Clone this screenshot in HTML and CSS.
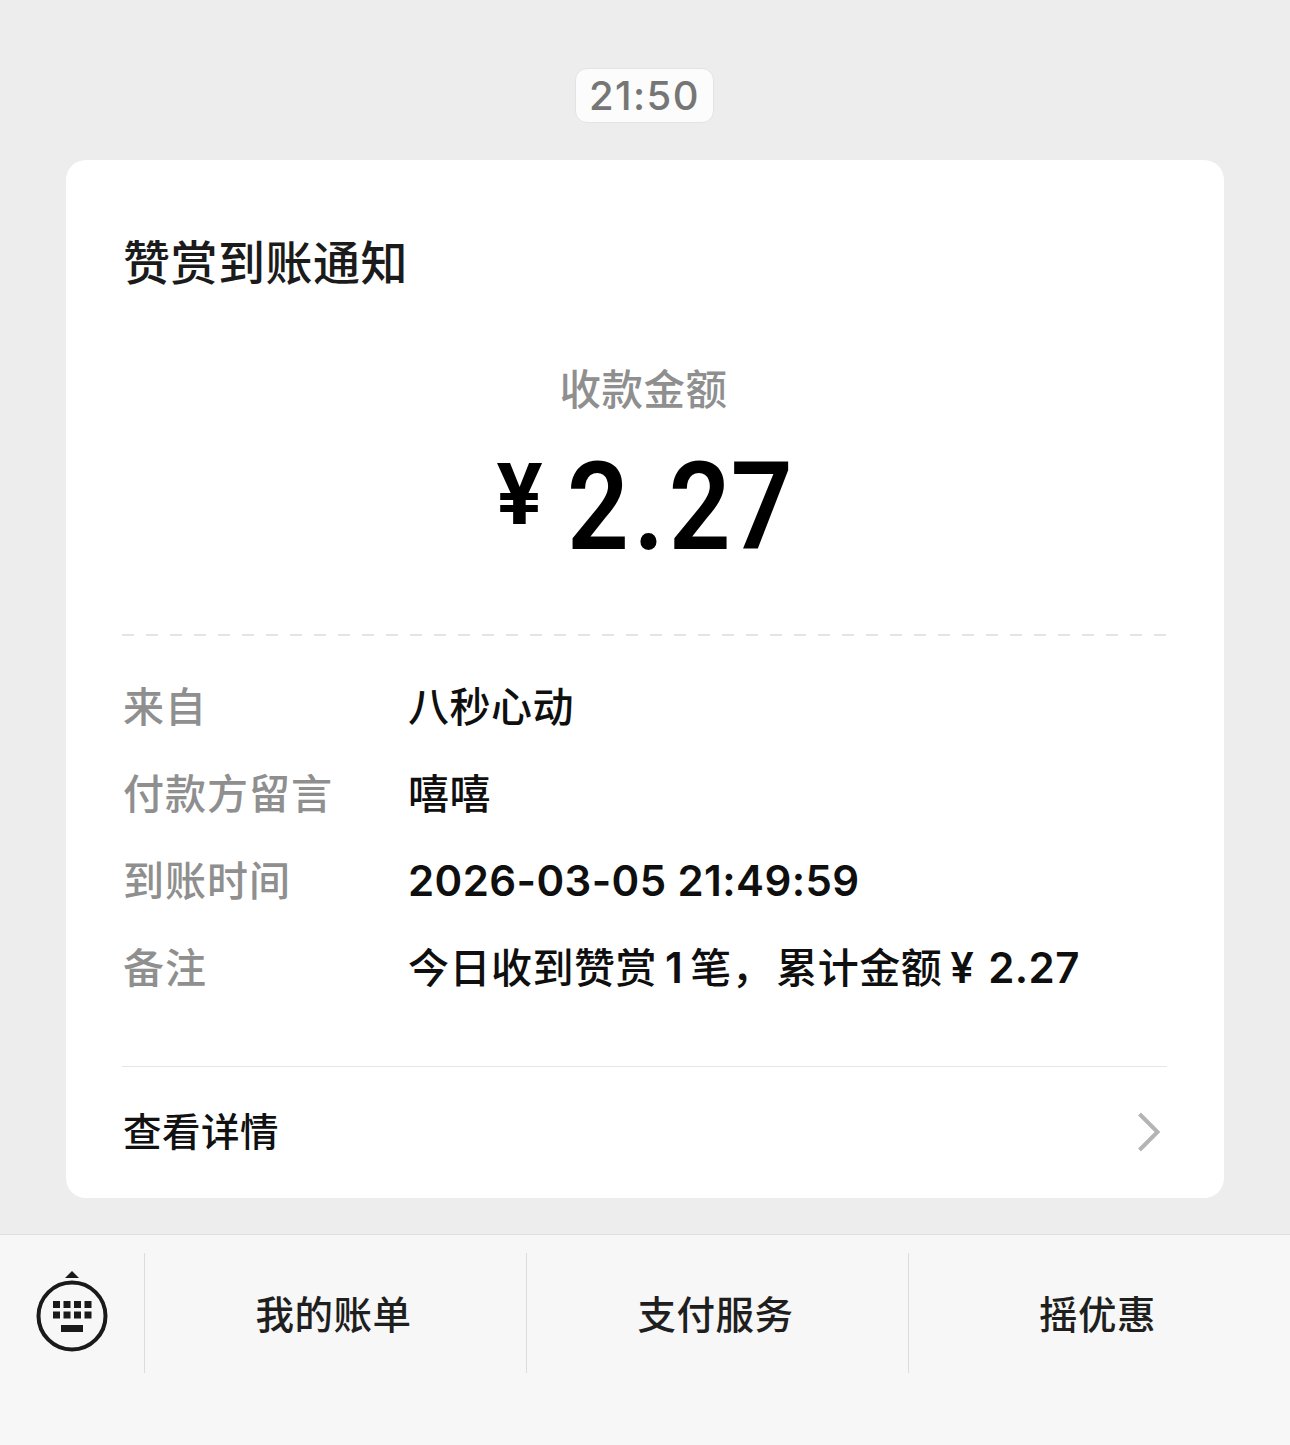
FILE: index.html
```html
<!DOCTYPE html>
<html lang="zh">
<head>
    <title>赞赏到账通知</title>
    <meta name="viewport" content="width=device-width,initial-scale=1">
    <link rel="stylesheet" href="styles.css">
</head>
<body>
<div class="chat">
    <div class="time-wrap"><span class="time">21:50</span></div>
    <div class="card">
        <div class="title">赞赏到账通知</div>
        <div class="sum-label">收款金额</div>
        <div class="sum"><span class="yen">¥</span><span class="num">2<span class="dot">.</span>27</span></div>
        <div class="dash"></div>
        <div class="rows">
            <div class="row"><span class="key">来自</span><span class="val">八秒心动</span></div>
            <div class="row"><span class="key">付款方留言</span><span class="val">嘻嘻</span></div>
            <div class="row"><span class="key">到账时间</span><span class="val"><span class="en">2026-03-05 21:49:59</span></span></div>
            <div class="row"><span class="key">备注</span><span class="val">今日收到赞赏<span class="en one">1</span>笔，<span class="after-comma">累计金额</span><span class="en tail">¥ 2.27</span></span></div>
        </div>
        <div class="more">
            <span class="more-text">查看详情</span>
            <svg class="arrow" width="24" height="40" viewBox="0 0 24 40"><path d="M2.5 2 L20.500 20 L2.500 38" fill="none" stroke="#b4b4b4" stroke-width="4"/></svg>
        </div>
    </div>
</div>
<div class="menu">
    <div class="kb">
        <!-- 键盘切换图标 -->
        <svg width="72" height="82" viewBox="0 0 72 82">
            <path d="M36 0 L43 7 H29 Z" fill="#1a1a1a"/>
            <circle cx="36" cy="45" r="33.500" fill="none" stroke="#1a1a1a" stroke-width="4"/>
            <g fill="#1a1a1a">
                <rect x="17" y="30" width="7" height="7"/><rect x="27.500" y="30" width="7" height="7"/><rect x="38" y="30" width="7" height="7"/><rect x="48.500" y="30" width="7" height="7"/>
                <rect x="17" y="40.500" width="7" height="7"/><rect x="27.500" y="40.500" width="7" height="7"/><rect x="38" y="40.500" width="7" height="7"/><rect x="48.500" y="40.500" width="7" height="7"/>
                <rect x="25" y="54" width="22" height="7"/>
            </g>
        </svg>
    </div>
    <div class="item">我的账单</div>
    <div class="item">支付服务</div>
    <div class="item">摇优惠</div>
</div>
</body>
</html>
```

FILE: styles.css
```css
* {
    box-sizing: border-box;
}

html,
body {
    margin: 0;
    height: 100%;
}

body {
    width: 1290px;
    height: 1445px;
    display: flex;
    flex-direction: column;
    overflow: hidden;
    background: #ededed;
    color: #111;
    font-family: "Noto Sans CJK SC", "Noto Sans", sans-serif;
}

.chat {
    height: 1234px;
    padding: 68px 66px 0;
}

.time-wrap {
    display: flex;
    justify-content: center;
    height: 92px;
    padding-right: 1px;
}

.time {
    width: 139px;
    height: 55px;
    display: flex;
    align-items: center;
    justify-content: center;
    background: #fcfcfc;
    border: 1px solid #e3e3e3;
    border-radius: 12px;
    color: #767676;
    font-family: Inter, sans-serif;
    font-size: 40px;
    font-weight: 500;
    letter-spacing: 1.400px;
}

.card {
    height: 1038px;
    padding: 0 57px;
    background: #fff;
    border-radius: 20px;
}

.title {
    height: 136px;
    padding-top: 66px;
    line-height: 68px;
    font-size: 47px;
    font-weight: 500;
    letter-spacing: .5px;
    color: #1b1b1b;
}

.sum-label {
    margin-top: 61px;
    height: 60px;
    line-height: 60px;
    padding-right: 3px;
    text-align: center;
    font-size: 41.500px;
    font-weight: 500;
    letter-spacing: .5px;
    color: #8f8f8f;
}

.sum {
    height: 177px;
    padding: 21px 0 0 5px;
    display: flex;
    align-items: flex-start;
    justify-content: center;
    color: #000;
    font-weight: 500;
}

.yen {
    margin: 9px 24px 0 0;
    font-family: Roboto, sans-serif;
    font-size: 86px;
    line-height: 96px;
    font-weight: 700;
}

.num {
    margin-right: -22px;
    font-family: Roboto, sans-serif;
    font-size: 122px;
    font-weight: 600;
    line-height: 140px;
    transform: scaleX(.89);
    transform-origin: left center;
}

.dot {
    margin: 0 5px;
}

.dash {
    margin: 40px 0 0 -1px;
    height: 2px;
    background: repeating-linear-gradient(to right, #e4e4e4 0 12px, transparent 12px 24px);
}

.rows {
    margin-top: 38px;
    display: flex;
    flex-direction: column;
    gap: 27px;
    height: 392px;
}

.row {
    display: flex;
    height: 60px;
    line-height: 60px;
    font-size: 41px;
}

.key {
    width: 285px;
    font-weight: 500;
    letter-spacing: 1px;
    color: #8f8f8f;
}

.val {
    font-weight: 500;
    letter-spacing: .5px;
    color: #0f0f0f;
}

.en {
    font-family: Inter, sans-serif;
    font-size: 42px;
    font-weight: 600;
    letter-spacing: .4px;
}

.one {
    margin: 0 7px 0 8px;
}

.after-comma {
    margin-left: 3px;
}

.tail {
    margin-left: 8px;
    word-spacing: 3px;
}

.more {
    height: 132px;
    margin-left: -1px;
    padding: 0 6px 2px 1px;
    display: flex;
    align-items: center;
    justify-content: space-between;
    border-top: 1px solid #e6e6e6;
    font-size: 38.500px;
    font-weight: 500;
    letter-spacing: .5px;
}

.more-text {
    margin-bottom: 6px;
}

.menu {
    flex: 1;
    display: grid;
    grid-template-columns: 144px 382px 382px 382px;
    padding-top: 18px;
    background: #f7f7f7;
    border-top: 1px solid #dedede;
}

.kb {
    height: 120px;
    padding-bottom: 2px;
    display: flex;
    align-items: center;
    justify-content: center;
}

.item {
    height: 120px;
    padding: 0 4px 2px 0;
    display: flex;
    align-items: center;
    justify-content: center;
    border-left: 1px solid #dcdcdc;
    font-size: 38.500px;
    font-weight: 500;
    letter-spacing: .5px;
    color: #1f1f1f;
}
```
